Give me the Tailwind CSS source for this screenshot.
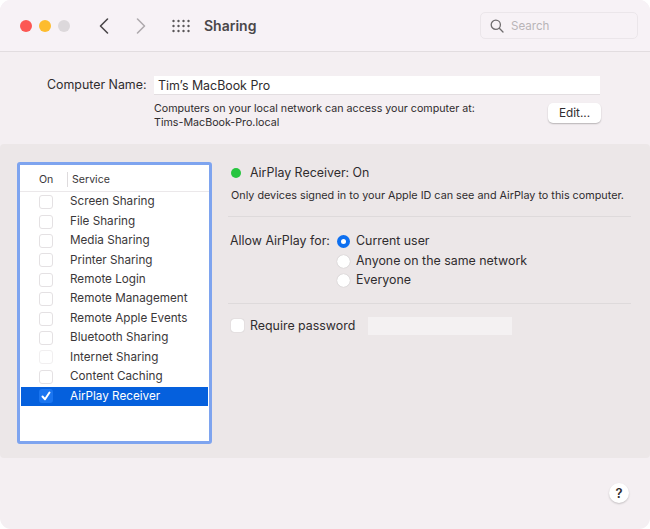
<!DOCTYPE html>
<html lang="en">
  <head>
    <meta charset="UTF-8" />
    <meta name="viewport" content="width=device-width, initial-scale=1.0" />
    <title>Sharing</title>
    <script src="https://cdn.jsdelivr.net/npm/@tailwindcss/browser@4"></script>
  </head>
  <body class="bg-white font-['Inter',sans-serif] text-[#2f2c2e]">
    <div class="w-[650px] h-[529px] rounded-[11px] bg-[#f4eff2] overflow-hidden flex flex-col">
      <!-- toolbar -->
      <header class="h-[52px] shrink-0 bg-[#f7f2f6] border-b border-[#e2dde0] flex items-center pl-[20px] pr-[12px]">
        <div class="flex gap-[7px]">
          <span class="w-[12px] h-[12px] rounded-full bg-[#fc5753]"></span>
          <span class="w-[12px] h-[12px] rounded-full bg-[#fdbc2e]"></span>
          <span class="w-[12px] h-[12px] rounded-full bg-[#dcd8db]"></span>
        </div>
        <svg class="ml-[28px] w-[12px] h-[18px]" viewBox="0 0 12 18" fill="none" stroke="#4a4749" stroke-width="1.6" stroke-linecap="round" stroke-linejoin="round">
          <path d="M9.5 2 L2.5 9 L9.5 16" />
        </svg>
        <svg class="ml-[25px] w-[12px] h-[18px]" viewBox="0 0 12 18" fill="none" stroke="#aeaaad" stroke-width="1.6" stroke-linecap="round" stroke-linejoin="round">
          <path d="M2.5 2 L9.5 9 L2.5 16" />
        </svg>
        <svg class="ml-[25px] w-[18px] h-[14px]" viewBox="0 0 18 14" fill="#5a5759">
          <circle cx="1.5" cy="2" r="1.2" /><circle cx="6.5" cy="2" r="1.2" /><circle cx="11.5" cy="2" r="1.2" /><circle cx="16.5" cy="2" r="1.2" />
          <circle cx="1.5" cy="7" r="1.2" /><circle cx="6.5" cy="7" r="1.2" /><circle cx="11.5" cy="7" r="1.2" /><circle cx="16.5" cy="7" r="1.2" />
          <circle cx="1.5" cy="12" r="1.2" /><circle cx="6.5" cy="12" r="1.2" /><circle cx="11.5" cy="12" r="1.2" /><circle cx="16.5" cy="12" r="1.2" />
        </svg>
        <h1 class="ml-[14px] text-[14px] font-semibold text-[#4a4749]">Sharing</h1>
        <div class="ml-auto w-[158px] h-[27px] rounded-[5px] border border-[#ebe6ea] flex items-center pl-[9px] gap-[7px]">
          <svg class="w-[14px] h-[14px]" viewBox="0 0 14 14" fill="none" stroke="#6f6c6e" stroke-width="1.3" stroke-linecap="round">
            <circle cx="5.8" cy="5.8" r="4.6" /><path d="M9.3 9.3 L13 13" />
          </svg>
          <span class="pt-[2px] text-[11.6px] text-[#b9b5b8]">Search</span>
        </div>
      </header>

      <!-- computer name -->
      <section class="h-[92px] shrink-0 relative pt-[24px] pl-[47px]">
        <div class="flex items-center h-[19px]">
          <label class="w-[107px] text-[12.4px]">Computer Name:</label>
          <div class="w-[446px] h-[19px] bg-white border-b border-[#e3dee1] text-[12.4px] leading-[20px] pl-[4px]">Tim’s MacBook Pro</div>
        </div>
        <div class="flex mt-[7px] pl-[107px]">
          <p class="w-[394px] text-[10.7px] leading-[14px]">Computers on your local network can access your computer at:<br />Tims-MacBook-Pro.local</p>
          <button class="w-[53px] h-[20px] mt-[1px] bg-white rounded-[5px] shadow-[0_1px_1.5px_rgba(0,0,0,0.25)] text-[11.8px] leading-[20px]">Edit...</button>
        </div>
      </section>

      <!-- services panel -->
      <main class="h-[314px] shrink-0 bg-[#ece7e8] rounded-[4px] flex pt-[18px] pl-[17px]">
        <div class="w-[195px] h-[282px] shrink-0 bg-white border-[3px] border-[#7ea4ef] rounded-[3px]">
          <div class="h-[27px] pt-[3px] flex items-center border-b border-[#ebe8ea] text-[10.6px] text-[#3b383a]">
            <span class="w-[47px] pl-[19px]">On</span>
            <span class="border-l border-[#dedbdd] pl-[4px] leading-[15px]">Service</span>
          </div>
          <ul class="pt-[0.5px] text-[11.7px] text-[#3b383a]">
            <li class="h-[19.4px] flex items-center pl-[19px] gap-[17px]"><span class="w-[14px] h-[14px] rounded-[3px] border border-[#e4e1e3]"></span>Screen Sharing</li>
            <li class="h-[19.4px] flex items-center pl-[19px] gap-[17px]"><span class="w-[14px] h-[14px] rounded-[3px] border border-[#e4e1e3]"></span>File Sharing</li>
            <li class="h-[19.4px] flex items-center pl-[19px] gap-[17px]"><span class="w-[14px] h-[14px] rounded-[3px] border border-[#e4e1e3]"></span>Media Sharing</li>
            <li class="h-[19.4px] flex items-center pl-[19px] gap-[17px]"><span class="w-[14px] h-[14px] rounded-[3px] border border-[#e4e1e3]"></span>Printer Sharing</li>
            <li class="h-[19.4px] flex items-center pl-[19px] gap-[17px]"><span class="w-[14px] h-[14px] rounded-[3px] border border-[#e4e1e3]"></span>Remote Login</li>
            <li class="h-[19.4px] flex items-center pl-[19px] gap-[17px]"><span class="w-[14px] h-[14px] rounded-[3px] border border-[#e4e1e3]"></span>Remote Management</li>
            <li class="h-[19.4px] flex items-center pl-[19px] gap-[17px]"><span class="w-[14px] h-[14px] rounded-[3px] border border-[#e4e1e3]"></span>Remote Apple Events</li>
            <li class="h-[19.4px] flex items-center pl-[19px] gap-[17px]"><span class="w-[14px] h-[14px] rounded-[3px] border border-[#e4e1e3]"></span>Bluetooth Sharing</li>
            <li class="h-[19.4px] flex items-center pl-[19px] gap-[17px]"><span class="w-[14px] h-[14px] rounded-[3px] border border-[#f1eff0]"></span>Internet Sharing</li>
            <li class="h-[19.4px] flex items-center pl-[19px] gap-[17px]"><span class="w-[14px] h-[14px] rounded-[3px] border border-[#e4e1e3]"></span>Content Caching</li>
            <li class="h-[19px] mt-[0.5px] mx-[1px] flex items-center pl-[18px] gap-[17px] bg-[#0560dd] text-white">
              <span class="w-[14px] h-[14px] rounded-[3px] bg-[#1a75f0] flex items-center justify-center">
                <svg class="w-[10px] h-[10px]" viewBox="0 0 10 10" fill="none" stroke="#fff" stroke-width="2" stroke-linecap="round" stroke-linejoin="round"><path d="M1.5 5.5 L4 8.2 L8.5 1.5" /></svg>
              </span>
              AirPlay Receiver
            </li>
          </ul>
        </div>

        <div class="ml-[16px] w-[403px]">
          <div class="flex items-center h-[18px] mt-[2px] pl-[3px] text-[12.4px]">
            <span class="w-[10px] h-[10px] rounded-full bg-[#27c53f]"></span>
            <span class="ml-[9px]">AirPlay Receiver: On</span>
          </div>
          <p class="mt-[7px] pl-[3px] text-[10.8px] leading-[14px] whitespace-nowrap">Only devices signed in to your Apple ID can see and AirPlay to this computer.</p>
          <div class="mt-[13px] h-px bg-[#dedadb]"></div>
          <div class="flex mt-[15px] pl-[2px] text-[12.4px]">
            <span class="w-[107px] leading-[17px]">Allow AirPlay for:</span>
            <ul>
              <li class="h-[19.5px] flex items-center gap-[6px]">
                <span class="w-[13px] h-[13px] rounded-full bg-[#0d6ff0] flex items-center justify-center"><span class="w-[5px] h-[5px] rounded-full bg-white"></span></span>Current user
              </li>
              <li class="h-[19.5px] flex items-center gap-[6px]"><span class="w-[13px] h-[13px] rounded-full bg-white shadow-[0_0_1px_rgba(0,0,0,0.3)]"></span>Anyone on the same network</li>
              <li class="h-[19.5px] flex items-center gap-[6px]"><span class="w-[13px] h-[13px] rounded-full bg-white shadow-[0_0_1px_rgba(0,0,0,0.3)]"></span>Everyone</li>
            </ul>
          </div>
          <div class="mt-[12px] h-px bg-[#dedadb]"></div>
          <div class="flex items-center mt-[13px] pl-[3px] text-[12.4px]">
            <span class="w-[13px] h-[13px] rounded-[3px] bg-white shadow-[0_0_1px_rgba(0,0,0,0.3)]"></span>
            <span class="ml-[6px] w-[118px]">Require password</span>
            <span class="w-[144px] h-[18px] bg-[#f4f1f2]"></span>
          </div>
        </div>
      </main>

      <!-- help -->
      <footer class="flex-1 flex justify-end items-start pt-[25px] pr-[21px]">
        <button class="w-[20px] h-[20px] rounded-full bg-white shadow-[0_1px_2px_rgba(0,0,0,0.2)] text-[13px] font-semibold leading-[20px] text-center">?</button>
      </footer>
    </div>
  </body>
</html>
